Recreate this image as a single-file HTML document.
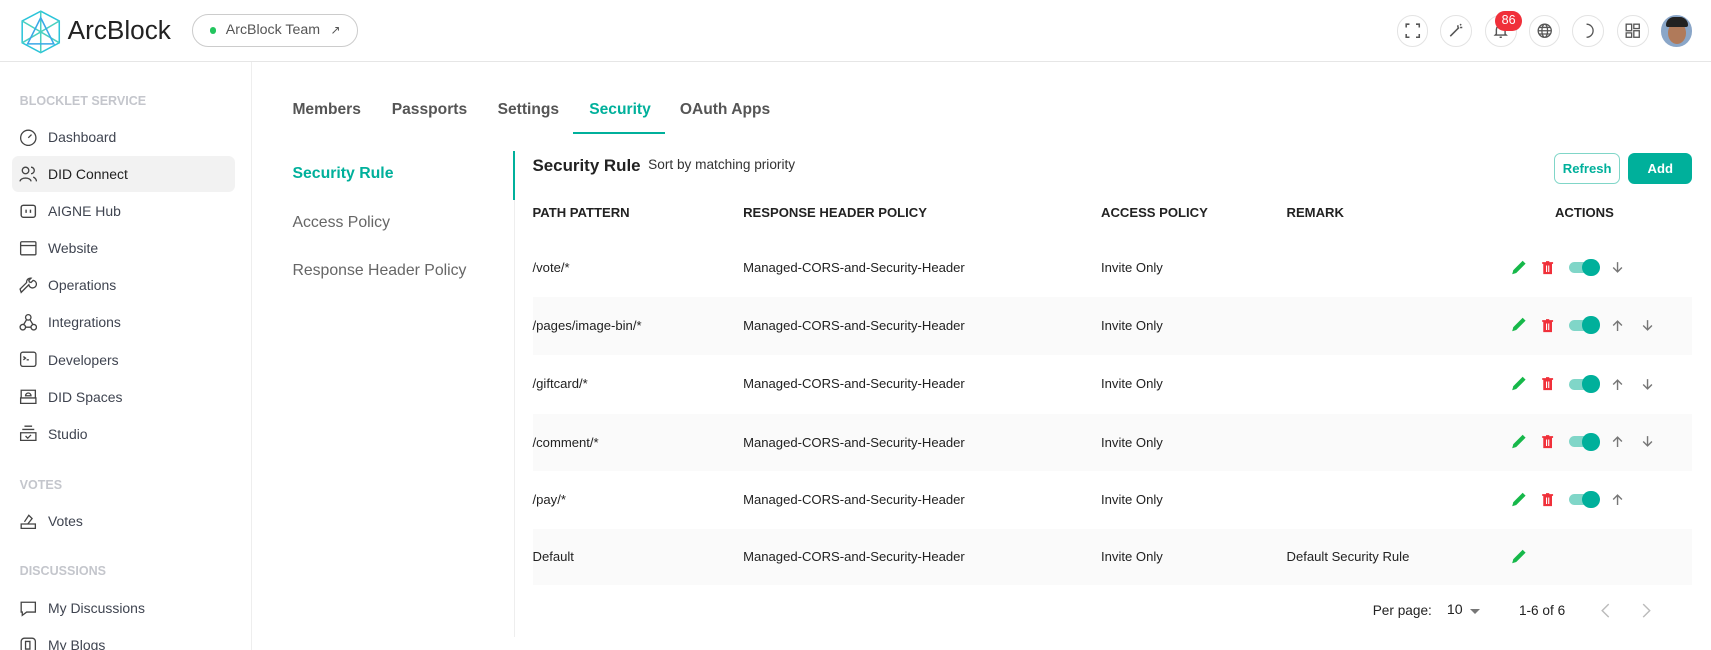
<!DOCTYPE html>
<html><head><meta charset="utf-8">
<style>
*{box-sizing:border-box;margin:0;padding:0}
html,body{width:1711px;height:650px;overflow:hidden;background:#fff}
body{font-family:"Liberation Sans",Arial,sans-serif;color:#222}
#w{zoom:1.0912;width:1568px;height:596px;position:relative;overflow:hidden}
.a{position:absolute}
.hdr{left:0;top:0;width:1568px;height:57px;border-bottom:1px solid #e6e6e6}
.side{left:0;top:57px;width:231px;height:540px;border-right:1px solid #eee}
.sec{font-size:11.5px;font-weight:bold;color:#c4c6cc;left:18px}
.it{left:11px;width:204px;height:33px;border-radius:6px;font-size:12.8px;color:#3f4450;display:flex;align-items:center;padding-left:6px}
.it svg{width:17px;height:17px;margin-right:10px;flex:none}
.it.act{background:#f2f2f2;color:#222}
.tab{top:93px;font-size:14.3px;font-weight:bold;color:#555}
.sub{left:268px;font-size:14.5px;color:#666}
.th{top:188px;font-size:12px;font-weight:bold;color:#222}
.row{left:488px;width:1063px;height:53px}
.row.g{background:#fafafa}
.c{position:absolute;top:0;line-height:53px;font-size:12px;color:#222}
.ib{width:29px;height:29px;border:1px solid #e3e3e3;border-radius:50%;top:14px;display:flex;align-items:center;justify-content:center}
.ib svg{width:16px;height:16px}
.tg{position:absolute;width:26px;height:10px;border-radius:5px;background:#80d6c8}
.tg:after{content:"";position:absolute;right:-2px;top:-3px;width:16px;height:16px;border-radius:50%;background:#00b09b}
</style></head><body><div id="w">
<div class="a hdr">
 <svg class="a" style="left:18px;top:8px" width="38" height="42" viewBox="0 0 38 42" fill="none" stroke="#2bc4d9" stroke-width="1.4"><path d="M19 2 L36 11 V31 L19 40 L2 31 V11 Z"/><path d="M19 2 L19 40 M2 11 L36 31 M36 11 L2 31" stroke="#4ad0c0"/><path d="M19 8 L31 32 H7 Z" stroke="#3aa8e8"/></svg>
 <div class="a" style="left:62px;top:14px;font-size:24px;color:#222">ArcBlock</div>
 <div class="a" style="left:176px;top:13px;width:152px;height:30px;border:1px solid #ccc;border-radius:15px;font-size:13px;color:#555;line-height:28px;padding-left:30px">ArcBlock Team <span style="font-size:11px;margin-left:6px">↗</span></div>
 <div class="a" style="left:192px;top:25px;width:6px;height:6px;border-radius:50%;background:#22c55e"></div>
 <div class="a ib" style="left:1280px"><svg viewBox="0 0 16 16" fill="none" stroke="#555" stroke-width="1.4"><path d="M2 5V2h3M11 2h3v3M14 11v3h-3M5 14H2v-3"/></svg></div>
 <div class="a ib" style="left:1320px"><svg viewBox="0 0 16 16" fill="none" stroke="#555" stroke-width="1.4"><path d="M3 13l8-8M10 3v2M12 5h2M12 2l1 1"/></svg></div>
 <div class="a ib" style="left:1361px"><svg viewBox="0 0 16 16" fill="none" stroke="#555" stroke-width="1.3"><path d="M4 11V7a4 4 0 018 0v4l1 1H3z M7 14h2"/></svg></div>
 <div class="a" style="left:1370px;top:10px;width:25px;height:18px;border-radius:9px;background:#f0303a;color:#fff;font-size:11.5px;text-align:center;line-height:18px">86</div>
 <div class="a ib" style="left:1401px"><svg viewBox="0 0 16 16" fill="none" stroke="#555" stroke-width="1.2"><circle cx="8" cy="8" r="6"/><ellipse cx="8" cy="8" rx="2.6" ry="6"/><path d="M2 8h12M3 5h10M3 11h10"/></svg></div>
 <div class="a ib" style="left:1441px"><svg viewBox="0 0 16 16" fill="none" stroke="#555" stroke-width="1.2"><path d="M6 2a6 6 0 010 12 6 6 0 000-12z"/></svg></div>
 <div class="a ib" style="left:1482px"><svg viewBox="0 0 16 16" fill="none" stroke="#555" stroke-width="1.2"><rect x="2" y="2" width="5" height="6"/><rect x="9" y="2" width="5" height="4"/><rect x="2" y="10" width="5" height="4"/><rect x="9" y="8" width="5" height="6"/></svg></div>
 <div class="a" style="left:1522px;top:14px;width:29px;height:29px;border-radius:50%;background:#8aa6c8;overflow:hidden"><div style="position:absolute;left:7px;top:6px;width:16px;height:20px;border-radius:50%;background:#b07a5a"></div><div style="position:absolute;left:5px;top:2px;width:20px;height:9px;border-radius:8px 8px 2px 2px;background:#222"></div></div>
</div>
<div class="a side">
 <div class="a sec" style="top:29px">BLOCKLET SERVICE</div>
 <div class="a it" style="top:52px"><svg viewBox="0 0 17 17" fill="none" stroke="#444" stroke-width="1.2"><circle cx="8.5" cy="9" r="7"/><path d="M8.5 9l3-3"/></svg>Dashboard</div>
 <div class="a it act" style="top:86px"><svg viewBox="0 0 17 17" fill="none" stroke="#444" stroke-width="1.2"><circle cx="6" cy="5" r="3"/><path d="M1 15c0-4 10-4 10 0M11 2a3 3 0 010 6M13 11c2 1 3 2 3 4"/></svg>DID Connect</div>
 <div class="a it" style="top:120px"><svg viewBox="0 0 17 17" fill="none" stroke="#444" stroke-width="1.3"><rect x="2" y="3" width="13" height="11" rx="2"/><path d="M6.5 7v3M10.5 7v3"/></svg>AIGNE Hub</div>
 <div class="a it" style="top:154px"><svg viewBox="0 0 17 17" fill="none" stroke="#444" stroke-width="1.2"><rect x="1.5" y="2.5" width="14" height="12" rx="1"/><path d="M1.5 6h14"/></svg>Website</div>
 <div class="a it" style="top:188px"><svg viewBox="0 0 17 17" fill="none" stroke="#444" stroke-width="1.2"><path d="M2 15l7-7a3.5 3.5 0 104-4l-2 2-1.5-.5L9 4l2-2a3.5 3.5 0 00-4 4L1 12z"/></svg>Operations</div>
 <div class="a it" style="top:222px"><svg viewBox="0 0 17 17" fill="none" stroke="#444" stroke-width="1.2"><circle cx="8.5" cy="4" r="2.5"/><circle cx="3.5" cy="13" r="2.5"/><circle cx="13.5" cy="13" r="2.5"/><path d="M7 6l-3 5M10 6l3 5M6 13h5"/></svg>Integrations</div>
 <div class="a it" style="top:256px"><svg viewBox="0 0 17 17" fill="none" stroke="#444" stroke-width="1.2"><rect x="1.5" y="2" width="14" height="13" rx="2"/><path d="M4 6l2 1.5L4 9M7 9h2"/></svg>Developers</div>
 <div class="a it" style="top:290px"><svg viewBox="0 0 17 17" fill="none" stroke="#444" stroke-width="1.2"><path d="M2 10V3h13v7M1.5 10h14v5h-14zM6 8a2.5 2.5 0 015 0z"/></svg>DID Spaces</div>
 <div class="a it" style="top:324px"><svg viewBox="0 0 17 17" fill="none" stroke="#444" stroke-width="1.2"><path d="M5 2h7M3 5h11M1.5 8h14v7h-14zM6 11l2 2 3-3"/></svg>Studio</div>
 <div class="a sec" style="top:381px">VOTES</div>
 <div class="a it" style="top:404px"><svg viewBox="0 0 17 17" fill="none" stroke="#444" stroke-width="1.2"><path d="M2 11h13v4H2zM5 9l4-6 3 3-4 5"/></svg>Votes</div>
 <div class="a sec" style="top:460px">DISCUSSIONS</div>
 <div class="a it" style="top:484px"><svg viewBox="0 0 17 17" fill="none" stroke="#444" stroke-width="1.2"><path d="M2 3h13v9H7l-4 3v-3H2z"/></svg>My Discussions</div>
 <div class="a it" style="top:518px"><svg viewBox="0 0 17 17" fill="none" stroke="#444" stroke-width="1.2"><rect x="2" y="2" width="13" height="13" rx="3"/><path d="M6 5h4v7H6z"/></svg>My Blogs</div>
</div>
<div class="a tab" style="left:268px">Members</div>
<div class="a tab" style="left:359px">Passports</div>
<div class="a tab" style="left:456px">Settings</div>
<div class="a tab" style="left:540px;color:#00b09b">Security</div>
<div class="a" style="left:525px;top:121px;width:84px;height:2px;background:#00b09b"></div>
<div class="a tab" style="left:623px">OAuth Apps</div>
<div class="a sub" style="top:151px;color:#00b09b;font-weight:bold">Security Rule</div>
<div class="a sub" style="top:196px">Access Policy</div>
<div class="a sub" style="top:240px">Response Header Policy</div>
<div class="a" style="left:471px;top:138px;width:1px;height:446px;background:#eee"></div>
<div class="a" style="left:470px;top:138px;width:2px;height:45px;background:#00b09b"></div>
<div class="a" style="left:488px;top:143px;font-size:15.5px;font-weight:bold">Security Rule</div>
<div class="a" style="left:594px;top:144px;font-size:12.5px;color:#333">Sort by matching priority</div>
<div class="a" style="left:1424px;top:140px;width:61px;height:29px;border:1px solid #80d6c8;border-radius:6px;color:#00b09b;font-size:12px;font-weight:bold;text-align:center;line-height:27px">Refresh</div>
<div class="a" style="left:1492px;top:140px;width:59px;height:29px;background:#00b09b;border-radius:6px;color:#fff;font-size:12px;font-weight:bold;text-align:center;line-height:29px">Add</div>
<div class="a th" style="left:488px">PATH PATTERN</div>
<div class="a th" style="left:681px">RESPONSE HEADER POLICY</div>
<div class="a th" style="left:1009px">ACCESS POLICY</div>
<div class="a th" style="left:1179px">REMARK</div>
<div class="a th" style="left:1425px">ACTIONS</div>
<svg width="0" height="0" style="position:absolute"><defs>
<symbol id="pen" viewBox="0 0 14 14"><path d="M1 13l1-3.5 8-8 2.5 2.5-8 8z" fill="#16b84a"/></symbol>
<symbol id="bin" viewBox="0 0 14 14"><path d="M3 3h8v10H3zM2 2h10v1.5H2zM5.5 1h3v1h-3z" fill="#f0303a"/><path d="M6 5v6M8 5v6" stroke="#fff" stroke-width="1"/></symbol>
<symbol id="up" viewBox="0 0 12 12"><path d="M6 11V2M2 6l4-4 4 4" fill="none" stroke="#777" stroke-width="1.3"/></symbol>
<symbol id="dn" viewBox="0 0 12 12"><path d="M6 1v9M2 6l4 4 4-4" fill="none" stroke="#777" stroke-width="1.3"/></symbol>
</defs></svg>
<div class="a row" style="top:219px"><div class="c" style="left:0">/vote/*</div><div class="c" style="left:193px">Managed-CORS-and-Security-Header</div><div class="c" style="left:521px">Invite Only</div>
<svg class="a" style="left:897px;top:18px" width="15" height="15"><use href="#pen"/></svg><svg class="a" style="left:923px;top:19px" width="14" height="14"><use href="#bin"/></svg><div class="tg" style="left:950px;top:21px"></div><svg class="a" style="left:988px;top:20px" width="12" height="12"><use href="#dn"/></svg></div>
<div class="a row g" style="top:272px"><div class="c" style="left:0">/pages/image-bin/*</div><div class="c" style="left:193px">Managed-CORS-and-Security-Header</div><div class="c" style="left:521px">Invite Only</div>
<svg class="a" style="left:897px;top:18px" width="15" height="15"><use href="#pen"/></svg><svg class="a" style="left:923px;top:19px" width="14" height="14"><use href="#bin"/></svg><div class="tg" style="left:950px;top:21px"></div><svg class="a" style="left:988px;top:20px" width="12" height="12"><use href="#up"/></svg><svg class="a" style="left:1016px;top:20px" width="12" height="12"><use href="#dn"/></svg></div>
<div class="a row" style="top:325px"><div class="c" style="left:0">/giftcard/*</div><div class="c" style="left:193px">Managed-CORS-and-Security-Header</div><div class="c" style="left:521px">Invite Only</div>
<svg class="a" style="left:897px;top:19px" width="15" height="15"><use href="#pen"/></svg><svg class="a" style="left:923px;top:20px" width="14" height="14"><use href="#bin"/></svg><div class="tg" style="left:950px;top:22px"></div><svg class="a" style="left:988px;top:21px" width="12" height="12"><use href="#up"/></svg><svg class="a" style="left:1016px;top:21px" width="12" height="12"><use href="#dn"/></svg></div>
<div class="a row g" style="top:379px"><div class="c" style="left:0">/comment/*</div><div class="c" style="left:193px">Managed-CORS-and-Security-Header</div><div class="c" style="left:521px">Invite Only</div>
<svg class="a" style="left:897px;top:18px" width="15" height="15"><use href="#pen"/></svg><svg class="a" style="left:923px;top:19px" width="14" height="14"><use href="#bin"/></svg><div class="tg" style="left:950px;top:21px"></div><svg class="a" style="left:988px;top:20px" width="12" height="12"><use href="#up"/></svg><svg class="a" style="left:1016px;top:20px" width="12" height="12"><use href="#dn"/></svg></div>
<div class="a row" style="top:432px"><div class="c" style="left:0">/pay/*</div><div class="c" style="left:193px">Managed-CORS-and-Security-Header</div><div class="c" style="left:521px">Invite Only</div>
<svg class="a" style="left:897px;top:18px" width="15" height="15"><use href="#pen"/></svg><svg class="a" style="left:923px;top:19px" width="14" height="14"><use href="#bin"/></svg><div class="tg" style="left:950px;top:21px"></div><svg class="a" style="left:988px;top:20px" width="12" height="12"><use href="#up"/></svg></div>
<div class="a row g" style="top:485px;height:51px"><div class="c" style="left:0;line-height:51px">Default</div><div class="c" style="left:193px;line-height:51px">Managed-CORS-and-Security-Header</div><div class="c" style="left:521px;line-height:51px">Invite Only</div><div class="c" style="left:691px;line-height:51px">Default Security Rule</div>
<svg class="a" style="left:897px;top:17px" width="15" height="15"><use href="#pen"/></svg></div>
<div class="a" style="left:1258px;top:553px;font-size:12.5px;color:#222">Per page:</div>
<div class="a" style="left:1326px;top:552px;font-size:13px;color:#222">10</div>
<div class="a" style="left:1347px;top:558px;width:0;height:0;border-left:5px solid transparent;border-right:5px solid transparent;border-top:5px solid #777"></div>
<div class="a" style="left:1392px;top:553px;font-size:12.5px;color:#222">1-6 of 6</div>
<svg class="a" style="left:1466px;top:553px" width="10" height="14"><path d="M8 1L2 7l6 6" fill="none" stroke="#bbb" stroke-width="1.3"/></svg>
<svg class="a" style="left:1504px;top:553px" width="10" height="14"><path d="M2 1l6 6-6 6" fill="none" stroke="#bbb" stroke-width="1.3"/></svg>
</div></body></html>
